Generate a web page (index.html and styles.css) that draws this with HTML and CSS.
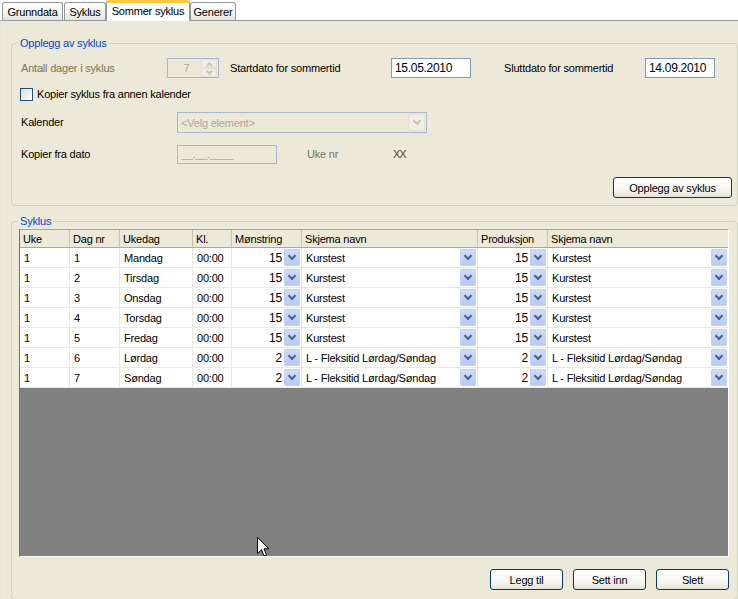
FILE: index.html
```html
<!DOCTYPE html>
<html>
<head>
<meta charset="utf-8">
<link rel="stylesheet" href="styles.css">
</head>
<body>
<div class="tabs">
  <div class="tab t1">Grunndata</div>
  <div class="tab t2">Syklus</div>
  <div class="tab t3 active">Sommer syklus</div>
  <div class="tab t4">Generer</div>
</div>
<div class="panel">
  <div class="group g1">
    <div class="legend">Opplegg av syklus</div>
    <div class="row r1">
      <span class="lbl dis w146">Antall dager i syklus</span>
      <span class="spin"><span class="spin-val">7</span><span class="spin-btns"><span class="sb up"></span><span class="sb down"></span></span></span>
      <span class="lbl w161 ml11">Startdato for sommertid</span>
      <span class="input w80">15.05.2010</span>
      <span class="lbl w141 ml33">Sluttdato for sommertid</span>
      <span class="input w70">14.09.2010</span>
    </div>
    <div class="row r2">
      <span class="check"></span>
      <span class="lbl">Kopier syklus fra annen kalender</span>
    </div>
    <div class="row r3">
      <span class="lbl w156">Kalender</span>
      <span class="combo"><span class="combo-txt">&lt;Velg element&gt;</span><span class="combo-btn"></span></span>
    </div>
    <div class="row r4">
      <span class="lbl w156">Kopier fra dato</span>
      <span class="input dis-input w100">__.__.____</span>
      <span class="lbl dis w86 ml30">Uke nr</span>
      <span class="lbl xx">XX</span>
    </div>
    <div class="row r5">
      <span class="btn btn-wide">Opplegg av syklus</span>
    </div>
  </div>

  <div class="group g2">
    <div class="legend">Syklus</div>
    <div class="grid">
      <div class="grow head">
        <span class="c c1">Uke</span><span class="c c2">Dag nr</span><span class="c c3">Ukedag</span><span class="c c4">Kl.</span><span class="c c5">Mønstring</span><span class="c c6">Skjema navn</span><span class="c c7">Produksjon</span><span class="c c8">Skjema navn</span>
      </div>
      <div class="grow">
        <span class="c c1">1</span><span class="c c2">1</span><span class="c c3">Mandag</span><span class="c c4">00:00</span><span class="c c5 num"><span class="n">15</span><span class="dd"></span></span><span class="c c6 sel"><span class="t">Kurstest</span><span class="dd"></span></span><span class="c c7 num"><span class="n">15</span><span class="dd"></span></span><span class="c c8 sel"><span class="t">Kurstest</span><span class="dd"></span></span>
      </div>
      <div class="grow">
        <span class="c c1">1</span><span class="c c2">2</span><span class="c c3">Tirsdag</span><span class="c c4">00:00</span><span class="c c5 num"><span class="n">15</span><span class="dd"></span></span><span class="c c6 sel"><span class="t">Kurstest</span><span class="dd"></span></span><span class="c c7 num"><span class="n">15</span><span class="dd"></span></span><span class="c c8 sel"><span class="t">Kurstest</span><span class="dd"></span></span>
      </div>
      <div class="grow">
        <span class="c c1">1</span><span class="c c2">3</span><span class="c c3">Onsdag</span><span class="c c4">00:00</span><span class="c c5 num"><span class="n">15</span><span class="dd"></span></span><span class="c c6 sel"><span class="t">Kurstest</span><span class="dd"></span></span><span class="c c7 num"><span class="n">15</span><span class="dd"></span></span><span class="c c8 sel"><span class="t">Kurstest</span><span class="dd"></span></span>
      </div>
      <div class="grow">
        <span class="c c1">1</span><span class="c c2">4</span><span class="c c3">Torsdag</span><span class="c c4">00:00</span><span class="c c5 num"><span class="n">15</span><span class="dd"></span></span><span class="c c6 sel"><span class="t">Kurstest</span><span class="dd"></span></span><span class="c c7 num"><span class="n">15</span><span class="dd"></span></span><span class="c c8 sel"><span class="t">Kurstest</span><span class="dd"></span></span>
      </div>
      <div class="grow">
        <span class="c c1">1</span><span class="c c2">5</span><span class="c c3">Fredag</span><span class="c c4">00:00</span><span class="c c5 num"><span class="n">15</span><span class="dd"></span></span><span class="c c6 sel"><span class="t">Kurstest</span><span class="dd"></span></span><span class="c c7 num"><span class="n">15</span><span class="dd"></span></span><span class="c c8 sel"><span class="t">Kurstest</span><span class="dd"></span></span>
      </div>
      <div class="grow">
        <span class="c c1">1</span><span class="c c2">6</span><span class="c c3">Lørdag</span><span class="c c4">00:00</span><span class="c c5 num"><span class="n">2</span><span class="dd"></span></span><span class="c c6 sel"><span class="t">L - Fleksitid Lørdag/Søndag</span><span class="dd"></span></span><span class="c c7 num"><span class="n">2</span><span class="dd"></span></span><span class="c c8 sel"><span class="t">L - Fleksitid Lørdag/Søndag</span><span class="dd"></span></span>
      </div>
      <div class="grow">
        <span class="c c1">1</span><span class="c c2">7</span><span class="c c3">Søndag</span><span class="c c4">00:00</span><span class="c c5 num"><span class="n">2</span><span class="dd"></span></span><span class="c c6 sel"><span class="t">L - Fleksitid Lørdag/Søndag</span><span class="dd"></span></span><span class="c c7 num"><span class="n">2</span><span class="dd"></span></span><span class="c c8 sel"><span class="t">L - Fleksitid Lørdag/Søndag</span><span class="dd"></span></span>
      </div>
      <div class="empty"></div>
      <svg class="cursor" width="13" height="21" viewBox="0 0 13 21"><path d="M0.5 0.5 L0.5 16.5 L4.5 12.8 L7 18.8 L9.5 17.8 L7 11.8 L12 11.8 Z" fill="#fff" stroke="#000" stroke-width="1"/></svg>
    </div>
    <div class="btnrow">
      <span class="btn btn-s">Legg til</span>
      <span class="btn btn-s">Sett inn</span>
      <span class="btn btn-s">Slett</span>
    </div>
  </div>
</div>
</body>
</html>
```

FILE: styles.css
```css
* { box-sizing: border-box; }
html, body {
  margin: 0;
  padding: 0;
}
body {
  width: 738px;
  height: 599px;
  overflow: hidden;
  background: #ffffff;
  font-family: "Liberation Sans", Arial, sans-serif;
  font-size: 11px;
  color: #000;
  letter-spacing: -0.2px;
}

/* Tabs */
.tabs {
  display: flex;
  align-items: flex-end;
  height: 20px;
  padding-left: 2px;
  position: relative;
  z-index: 2;
}
.tab {
  height: 18px;
  border: 1px solid #919B9C;
  border-bottom: none;
  border-radius: 3px 3px 0 0;
  background: linear-gradient(#ffffff, #f3f3ef 60%, #e4e3dc);
  display: flex;
  align-items: center;
  justify-content: center;
  white-space: nowrap;
}
.t1 { width: 61px; }
.t2 { width: 42px; margin-left: 1px; }
.t3 { width: 84px; }
.t4 { width: 46px; }
.tab.active {
  height: 21px;
  margin-bottom: -1px;
  background: #fcfcfe;
  border-top: 3px solid #FFC83C;
  border-color: #919B9C;
  border-top-color: #FFC83C;
  padding-bottom: 2px;
}

/* Panel */
.panel {
  border-top: 1px solid #919B9C;
  border-left: 1px solid #e8e6da;
  background: #ECE9D8;
  height: 579px;
  padding-left: 10px;
  padding-top: 22px;
}

.group {
  position: relative;
  width: 727px;
  border: 1px solid #D0D0BF;
  border-radius: 4px;
}
.legend {
  position: absolute;
  top: -7px;
  left: 6px;
  padding: 0 2px;
  background: #ECE9D8;
  color: #0046D5;
  line-height: 13px;
}
.g1 {
  height: 163px;
  padding-left: 9px;
  padding-right: 5px;
}
.g2 {
  margin-top: 15px;
  height: 379px;
  padding-left: 7px;
  padding-top: 7px;
}

.row {
  display: flex;
  align-items: center;
  height: 20px;
}
.r1 { margin-top: 14px; }
.r2 { margin-top: 6px; }
.r3 { margin-top: 8px; height: 21px; }
.r4 { margin-top: 11px; }
.r5 { margin-top: 13px; height: 21px; justify-content: flex-end; }

.lbl { white-space: nowrap; line-height: 13px; }
.dis { color: #7a7658; }
.w146 { width: 146px; }
.w161 { width: 161px; }
.w141 { width: 141px; }
.w156 { width: 156px; }
.w86 { width: 86px; }
.ml11 { margin-left: 11px; }
.ml33 { margin-left: 33px; }
.ml30 { margin-left: 30px; }

.spin {
  width: 52px;
  height: 20px;
  border: 1px solid #A9B8CE;
  background: #ECE9D8;
  display: flex;
  align-items: center;
}
.spin-val {
  flex: 1;
  text-align: center;
  color: #ACA899;
  padding-left: 4px;
}
.spin-btns {
  width: 16px;
  height: 18px;
  display: flex;
  flex-direction: column;
  margin-right: 1px;
}
.sb {
  flex: 1;
  background: #F1EFE4;
  border: 1px solid #E3E1D5;
  border-radius: 2px;
  position: relative;
}
.sb::after {
  content: "";
  position: absolute;
  left: 5px;
  width: 3px;
  height: 3px;
  border-left: 2px solid #C9C7BA;
  border-top: 2px solid #C9C7BA;
}
.sb.up::after { top: 3px; transform: rotate(45deg); }
.sb.down::after { top: 0px; transform: rotate(225deg); }

.input {
  height: 20px;
  border: 1px solid #7F9DB9;
  background: #fff;
  padding-left: 3px;
  display: flex;
  align-items: center;
  font-size: 12px;
  letter-spacing: -0.3px;
}
.w80 { width: 80px; }
.w70 { width: 70px; }
.w100 { width: 100px; }
.dis-input {
  background: #ECE9D8;
  border-color: #A9B8CE;
  color: #ACA899;
  font-size: 11px;
  height: 19px;
}

.check {
  width: 13px;
  height: 13px;
  border: 1px solid #1C5180;
  background: linear-gradient(135deg, #DCDCD7, #ffffff);
  margin-left: -1px;
  margin-right: 4px;
}

.combo {
  width: 250px;
  height: 21px;
  border: 1px solid #A9B8CE;
  background: #ECE9D8;
  display: flex;
  align-items: center;
  padding: 0 1px 0 3px;
}
.combo-txt { flex: 1; color: #ACA899; }
.combo-btn {
  width: 17px;
  height: 17px;
  background: #F1EFE4;
  border: 1px solid #E3E1D5;
  border-radius: 2px;
  position: relative;
}
.combo-btn::after {
  content: "";
  position: absolute;
  left: 5px;
  top: 3px;
  width: 4px;
  height: 4px;
  border-right: 2px solid #C9C7BA;
  border-bottom: 2px solid #C9C7BA;
  transform: rotate(45deg);
}
.xx { color: #4a4a3a; letter-spacing: -1px; }

.btn {
  height: 21px;
  border: 1px solid #003C74;
  border-radius: 3px;
  background: linear-gradient(#ffffff, #f5f4ef 70%, #e3e2da);
  display: flex;
  align-items: center;
  justify-content: center;
  white-space: nowrap;
}
.btn-wide { width: 119px; }
.btn-s { width: 73px; }
.btnrow {
  display: flex;
  justify-content: flex-end;
  gap: 10px;
  margin-top: 12px;
  padding-right: 8px;
}

/* Grid */
.grid {
  position: relative;
  width: 710px;
  height: 328px;
  border-top: 1px solid #ACA899;
  border-left: 1px solid #716F64;
  border-right: 1px solid #ffffff;
  border-bottom: 1px solid #ffffff;
  background: #808080;
  display: flex;
  flex-direction: column;
}
.grow {
  display: flex;
  height: 20px;
  background: #fff;
  border-bottom: 1px solid #EBE9DD;
  flex: none;
}
.grow.head {
  height: 18px;
  background: #ECE9D8;
  border-bottom: 1px solid #ACA899;
}
.c {
  height: 100%;
  border-right: 1px solid #EBE9DD;
  display: flex;
  align-items: center;
  padding-left: 4px;
  white-space: nowrap;
  overflow: hidden;
  flex: none;
}
.head .c {
  border-right: 1px solid #C7C5B2;
  padding-left: 3px;
}
.c1 { width: 50px; }
.c2 { width: 50px; }
.c3 { width: 73px; }
.c4 { width: 39px; }
.c5 { width: 70px; }
.c6 { width: 176px; }
.c7 { width: 70px; }
.c8 { width: 180px; border-right: none; }
.head .c8 { border-right: none; }

.num { justify-content: flex-end; padding-left: 0; padding-right: 1px; }
.num .n { margin-right: 2px; font-size: 12px; }
.sel { padding-right: 1px; }
.sel .t { flex: 1; }
.dd {
  width: 16px;
  height: 17px;
  background: linear-gradient(#CEDCFB, #B6CAF5);
  border: 1px solid #C3D3F8;
  border-radius: 1px;
  position: relative;
  flex: none;
}
.dd::after {
  content: "";
  position: absolute;
  left: 4px;
  top: 3px;
  width: 4px;
  height: 4px;
  border-right: 2px solid #4D6185;
  border-bottom: 2px solid #4D6185;
  transform: rotate(45deg);
}
.empty { flex: 1; }

.cursor {
  position: absolute;
  left: 237px;
  top: 307px;
}
```
